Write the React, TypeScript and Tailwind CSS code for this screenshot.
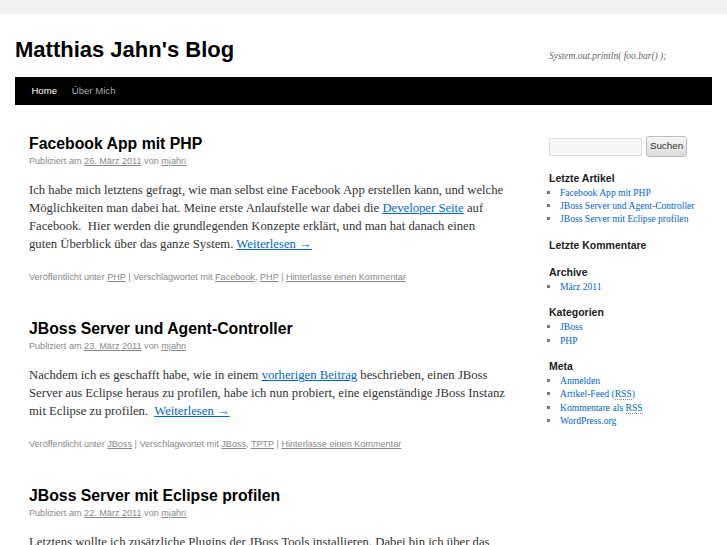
import React from "react";

const sans = { fontFamily: '"Liberation Sans", Arial, sans-serif' };
const serif = { fontFamily: '"Liberation Serif", "Times New Roman", serif' };

function Meta({ date }: { date: string }) {
  return (
    <div className="mt-[3px] text-[9.1px] leading-[13.5px] text-[#888]" style={sans}>
      Publiziert am <a className="underline text-[#888]">{date}</a> von{" "}
      <a className="underline text-[#888]">mjahn</a>
    </div>
  );
}

function Utility({ cat, tags }: { cat: string; tags: string[] }) {
  return (
    <div className="mt-[18px] text-[9.1px] leading-[13.5px] text-[#888]" style={sans}>
      Veröffentlicht unter <a className="underline">{cat}</a> | Verschlagwortet mit{" "}
      {tags.map((t, i) => (
        <React.Fragment key={t}>
          <a className="underline">{t}</a>
          {i < tags.length - 1 ? ", " : ""}
        </React.Fragment>
      ))}{" "}
      | <a className="underline">Hinterlasse einen Kommentar</a>
    </div>
  );
}

function Post({
  title,
  date,
  children,
  cat,
  tags,
}: {
  title: string;
  date: string;
  children: React.ReactNode;
  cat?: string;
  tags?: string[];
}) {
  return (
    <div className="mb-[35.5px]">
      <h2 className="text-[15.8px] leading-[17px] font-bold text-black" style={sans}>
        {title}
      </h2>
      <Meta date={date} />
      <p className="mt-[12.5px] text-[12.7px] leading-[18px] text-[#333]" style={serif}>
        {children}
      </p>
      {cat && tags && <Utility cat={cat} tags={tags} />}
    </div>
  );
}

function Widget({ title, items }: { title: string; items: React.ReactNode[] }) {
  return (
    <div className="mb-[12px]">
      <h3 className="text-[10.5px] leading-[15px] font-bold text-[#222]" style={sans}>
        {title}
      </h3>
      {items.length > 0 && (
        <ul className="list-[square] pl-[11px] text-[9.6px] leading-[13.4px] text-[#666] marker:text-[#777]" style={serif}>
          {items.map((it, i) => (
            <li key={i}>
              <a className="text-[#0066cc]">{it}</a>
            </li>
          ))}
        </ul>
      )}
    </div>
  );
}

export default function App() {
  const link = "text-[#0066cc] underline";
  return (
    <div className="min-h-[545px] bg-[#f1f1f1] pt-[14px]">
      <div className="bg-white px-[15px] min-h-[531px]">
        <header className="flex justify-between pt-[22px]">
          <h1 className="text-[22px] leading-[27px] font-bold text-black mb-[14px]" style={sans}>
            Matthias Jahn's Blog
          </h1>
          <div className="w-[163px] mt-[14px] text-[9.5px] leading-[13px] italic text-[#666]" style={serif}>
            System.out.println( foo.bar() );
          </div>
        </header>
        <nav className="h-[28px] bg-black pl-[9px] flex text-[9.6px]" style={sans}>
          <a className="px-[7.4px] leading-[28px] text-white">Home</a>
          <a className="px-[7.4px] leading-[28px] text-[#aaa]">Über Mich</a>
        </nav>
        <div className="flex pt-[30px]">
          <main className="ml-[14px] w-[490px]">
            <Post title="Facebook App mit PHP" date="26. März 2011" cat="PHP" tags={["Facebook", "PHP"]}>
              Ich habe mich letztens gefragt, wie man selbst eine Facebook App erstellen kann, und welche
              <br />
              Möglichkeiten man dabei hat. Meine erste Anlaufstelle war dabei die{" "}
              <a className={link}>Developer Seite</a> auf
              <br />
              Facebook.&nbsp; Hier werden die grundlegenden Konzepte erklärt, und man hat danach einen
              <br />
              guten Überblick über das ganze System. <a className={link}>Weiterlesen →</a>
            </Post>
            <Post title="JBoss Server und Agent-Controller" date="23. März 2011" cat="JBoss" tags={["JBoss", "TPTP"]}>
              Nachdem ich es geschafft habe, wie in einem <a className={link}>vorherigen Beitrag</a> beschrieben,
              einen JBoss
              <br />
              Server aus Eclipse heraus zu profilen, habe ich nun probiert, eine eigenständige JBoss Instanz
              <br />
              mit Eclipse zu profilen.&nbsp; <a className={link}>Weiterlesen →</a>
            </Post>
            <Post title="JBoss Server mit Eclipse profilen" date="22. März 2011">
              Letztens wollte ich zusätzliche Plugins der JBoss Tools installieren. Dabei bin ich über das
            </Post>
          </main>
          <aside className="ml-auto w-[163px] shrink-0">
            <div className="mt-[1px] flex items-center h-[21px] mb-[13.5px]">
              <input
                className="mt-[1px] w-[93px] h-[18px] border border-[#ddd] bg-[#f7f7f7] outline-none"
                type="text"
              />
              <button
                className="ml-[4px] w-[41px] h-[21px] rounded-[3px] border border-[#bbb] bg-gradient-to-b from-[#f6f6f6] to-[#dcdcdc] text-[9.8px] text-[#333]"
                style={sans}
              >
                Suchen
              </button>
            </div>
            <Widget
              title="Letzte Artikel"
              items={["Facebook App mit PHP", "JBoss Server und Agent-Controller", "JBoss Server mit Eclipse profilen"]}
            />
            <Widget title="Letzte Kommentare" items={[]} />
            <Widget title="Archive" items={["März 2011"]} />
            <Widget title="Kategorien" items={["JBoss", "PHP"]} />
            <Widget
              title="Meta"
              items={[
                "Anmelden",
                <>
                  Artikel-Feed (<abbr className="no-underline border-b border-dotted border-[#888]">RSS</abbr>)
                </>,
                <>
                  Kommentare als <abbr className="no-underline border-b border-dotted border-[#888]">RSS</abbr>
                </>,
                "WordPress.org",
              ]}
            />
          </aside>
        </div>
      </div>
    </div>
  );
}
